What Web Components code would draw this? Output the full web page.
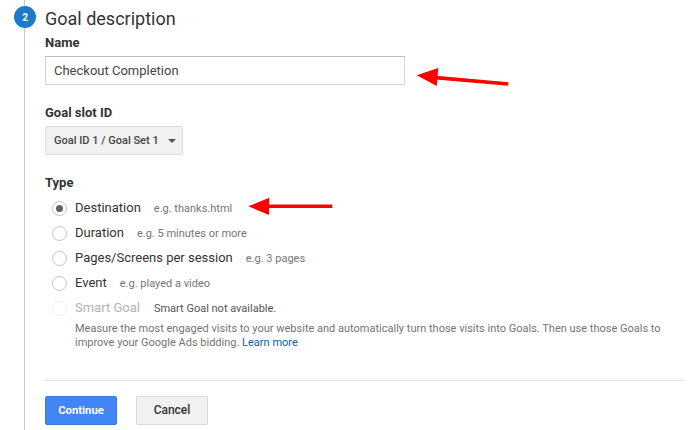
<!DOCTYPE html>
<html lang="en">
<head>
<meta charset="utf-8">
<title>Goal description</title>
<style>
  html, body { margin: 0; height: 100%; overflow: hidden; background: #fff; }
  body { font-family: Roboto, "Liberation Sans", sans-serif; color: #333; }
</style>
</head>
<body>
<goal-step number="2" heading="Goal description">
  <form-field label="Name">
    <text-box value="Checkout Completion"></text-box>
  </form-field>
  <form-field label="Goal slot ID">
    <select-box value="Goal ID 1 / Goal Set 1"></select-box>
  </form-field>
  <form-field label="Type">
    <radio-row label="Destination" hint="e.g. thanks.html" checked></radio-row>
    <radio-row label="Duration" hint="e.g. 5 minutes or more"></radio-row>
    <radio-row label="Pages/Screens per session" hint="e.g. 3 pages"></radio-row>
    <radio-row label="Event" hint="e.g. played a video"></radio-row>
    <radio-row label="Smart Goal" hint="Smart Goal not available." disabled></radio-row>
    <help-note>Measure the most engaged visits to your website and automatically turn those visits into Goals. Then use those Goals to<br>improve your Google Ads bidding. <a href="#">Learn more</a></help-note>
  </form-field>
  <action-bar>
    <flat-button primary>Continue</flat-button>
    <flat-button>Cancel</flat-button>
  </action-bar>
</goal-step>
<red-arrows></red-arrows>

<script>
class GoalStep extends HTMLElement {
  connectedCallback() {
    this.attachShadow({ mode: 'open' });
    this.shadowRoot.innerHTML = `
      <style>
        :host { display: block; position: relative; height: 430px; padding-left: 45px; box-sizing: border-box; }
        .rail { position: absolute; left: 24px; top: 0; bottom: 0; width: 1px; background: #c6c6c6; }
        .badge {
          position: absolute; left: 14px; top: 6px; width: 22px; height: 22px; border-radius: 50%;
          background: #1c7ac9; color: #fff; font-size: 10px; font-weight: 700;
          display: flex; align-items: center; justify-content: center;
        }
        h2 { margin: 0; padding-top: 7px; font-size: 18px; font-weight: 400; line-height: 24px; color: #333; }
      </style>
      <div class="rail"></div>
      <div class="badge">${this.getAttribute('number')}</div>
      <h2>${this.getAttribute('heading')}</h2>
      <slot></slot>
    `;
  }
}

class FormField extends HTMLElement {
  connectedCallback() {
    this.attachShadow({ mode: 'open' });
    this.shadowRoot.innerHTML = `
      <style>
        :host { display: block; margin-top: 20px; }
        :host(:first-of-type) { margin-top: 4px; }
        label { display: block; font-size: 13px; font-weight: 700; line-height: 16px; color: #333; margin-bottom: 5px; }
      </style>
      <label>${this.getAttribute('label')}</label>
      <slot></slot>
    `;
  }
}

class TextBox extends HTMLElement {
  connectedCallback() {
    this.attachShadow({ mode: 'open' });
    this.shadowRoot.innerHTML = `
      <style>
        :host { display: block; width: 360px; height: 29px; box-sizing: border-box; background: #fff;
          border: 1px solid #d4d4d4; border-top-color: #bdbdbd; padding-left: 8px;
          font-size: 13px; line-height: 27px; color: #444; }
      </style>
      ${this.getAttribute('value')}
    `;
  }
}

class SelectBox extends HTMLElement {
  connectedCallback() {
    this.attachShadow({ mode: 'open' });
    this.shadowRoot.innerHTML = `
      <style>
        :host { display: flex; align-items: center; width: 138px; height: 29px; box-sizing: border-box;
          background: #f1f1f1; border: 1px solid #dcdcdc; border-radius: 2px; padding-left: 8px;
          font-size: 11px; font-weight: 500; color: #444; }
        .caret { margin-left: 9px; width: 0; height: 0; border: 4px solid transparent; border-top-color: #555; border-bottom: 0; }
      </style>
      <span>${this.getAttribute('value')}</span><span class="caret"></span>
    `;
  }
}

class RadioRow extends HTMLElement {
  connectedCallback() {
    this.attachShadow({ mode: 'open' });
    this.shadowRoot.innerHTML = `
      <style>
        :host { display: flex; align-items: center; height: 25px; padding-left: 7px; font-size: 13px; color: #333; }
        .dot { width: 15px; height: 15px; box-sizing: border-box; border: 1px solid #c4c4c4; border-radius: 50%;
          margin-right: 8px; display: flex; align-items: center; justify-content: center; flex: none; background: #fff; }
        :host([checked]) .dot::after { content: ""; width: 7px; height: 7px; border-radius: 50%; background: #616161; }
        :host([disabled]) .dot { border-color: #eee; }
        .label { padding-bottom: 2px; }
        :host([disabled]) .label { color: #b4b4b4; }
        .hint { margin-left: 13px; font-size: 11px; color: #757575; }
        :host([disabled]) .hint { color: #555; margin-left: 14px; }
      </style>
      <span class="dot"></span>
      <span class="label">${this.getAttribute('label')}</span>
      <span class="hint">${this.getAttribute('hint')}</span>
    `;
  }
}

class HelpNote extends HTMLElement {
  connectedCallback() {
    this.attachShadow({ mode: 'open' });
    this.shadowRoot.innerHTML = `
      <style>
        :host { display: block; padding: 1px 0 0 30px; font-size: 11px; line-height: 14px; color: #757575; }
        ::slotted(a) { color: #15599e; text-decoration: none; }
      </style>
      <slot></slot>
    `;
  }
}

class ActionBar extends HTMLElement {
  connectedCallback() {
    this.attachShadow({ mode: 'open' });
    this.shadowRoot.innerHTML = `
      <style>
        :host { display: flex; gap: 19px; width: 639px; margin-top: 30px; padding-top: 15px; border-top: 1px solid #e2e2e2; }
      </style>
      <slot></slot>
    `;
  }
}

class FlatButton extends HTMLElement {
  connectedCallback() {
    this.attachShadow({ mode: 'open' });
    this.shadowRoot.innerHTML = `
      <style>
        :host { display: flex; align-items: center; justify-content: center; width: 72px; height: 29px; box-sizing: border-box;
          padding-bottom: 1px; background: #f1f1f1; border: 1px solid #d8d8d8; border-radius: 2px;
          font-size: 12px; font-weight: 500; color: #333; }
        :host([primary]) { background: #4285f4; border-color: #3b78e0; color: #fff; font-size: 11.3px; font-weight: 700; }
      </style>
      <slot></slot>
    `;
  }
}

// annotation arrows drawn over the form
class RedArrows extends HTMLElement {
  connectedCallback() {
    this.attachShadow({ mode: 'open' });
    this.shadowRoot.innerHTML = `
      <style>
        :host { position: absolute; left: 0; top: 0; width: 700px; height: 430px; pointer-events: none; }
        svg { display: block; }
      </style>
      <svg width="700" height="430" viewBox="0 0 700 430">
        <polygon fill="#fe0000" points="416.7,75.2 438.3,68 436.8,86"/>
        <line x1="436" y1="77.6" x2="508.3" y2="84" stroke="#fe0000" stroke-width="3.6"/>
        <polygon fill="#fe0000" points="248.3,206.3 269.3,197.7 269,215"/>
        <line x1="268" y1="206.3" x2="332.3" y2="206.3" stroke="#fe0000" stroke-width="3.6"/>
      </svg>
    `;
  }
}

customElements.define('goal-step', GoalStep);
customElements.define('form-field', FormField);
customElements.define('text-box', TextBox);
customElements.define('select-box', SelectBox);
customElements.define('radio-row', RadioRow);
customElements.define('help-note', HelpNote);
customElements.define('action-bar', ActionBar);
customElements.define('flat-button', FlatButton);
customElements.define('red-arrows', RedArrows);
</script>
</body>
</html>
